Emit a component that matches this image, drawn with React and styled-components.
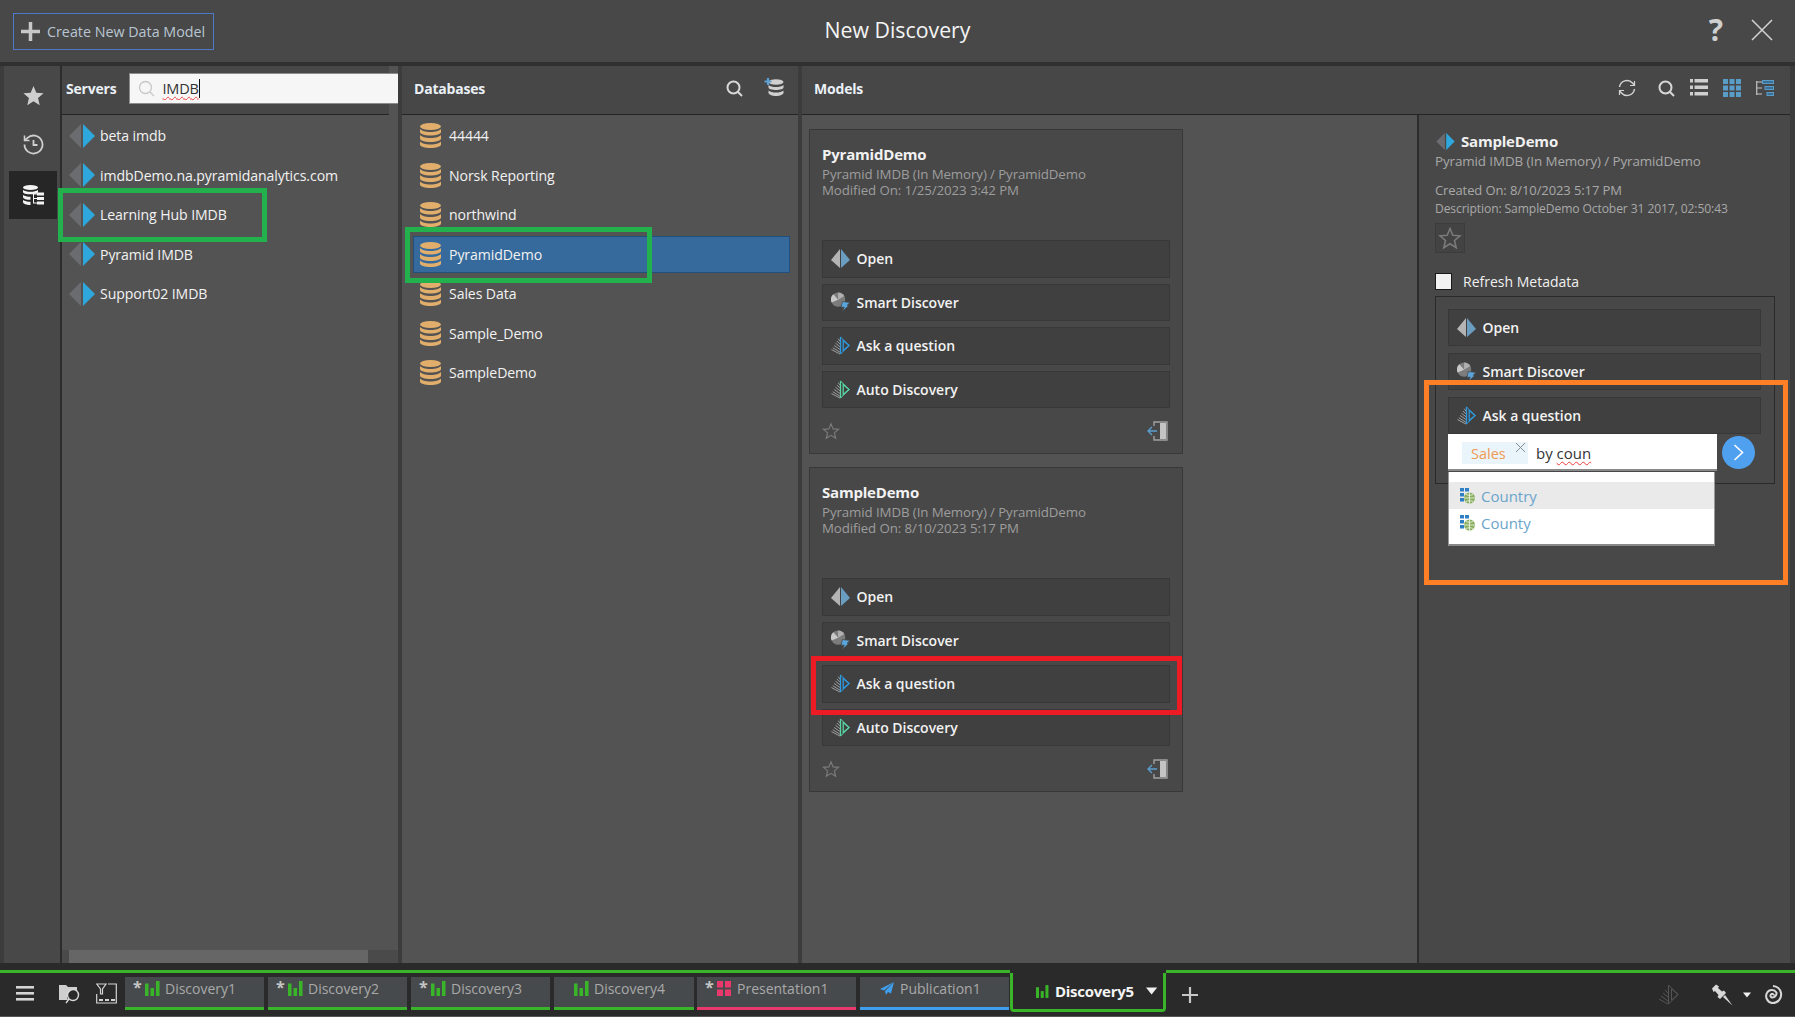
import React from "react";
import styled, { createGlobalStyle } from "styled-components";

const FONT = `"Open Sans", "Noto Sans", "Liberation Sans", sans-serif`;

const Global = createGlobalStyle`
  html, body { margin: 0; padding: 0; background: #2a2a2a; }
  body { font-family: ${FONT}; }
  * { box-sizing: border-box; }
`;

const Page = styled.div`
  position: relative;
  width: 1795px;
  height: 1017px;
  overflow: hidden;
  display: flex;
  flex-direction: column;
  background: #2c2c2c;
  color: #f0f0f0;
`;

/* ---------- top bar ---------- */
const TopBar = styled.header`
  height: 66px;
  flex: none;
  display: flex;
  align-items: flex-start;
  justify-content: space-between;
  background: #484848;
  border-bottom: 4px solid #303030;
  padding: 13px 22px 0 13px;
`;
const CreateButton = styled.button`
  width: 201px;
  height: 37px;
  display: flex;
  align-items: center;
  gap: 7px;
  padding: 0 0 0 7px;
  background: transparent;
  border: 1px solid #4f78c8;
  color: #b9c6d2;
  font: 400 14.3px ${FONT};
`;
const Title = styled.h1`
  position: absolute;
  left: 0;
  right: 0;
  top: 13px;
  margin: 0;
  text-align: center;
  font: 400 21.3px/34px ${FONT};
  color: #f4f4f4;
  pointer-events: none;
`;
const TopActions = styled.div`
  display: flex;
  align-items: center;
  gap: 28px;
  height: 34px;
`;
const HelpMark = styled.span`
  font: 700 30px/34px ${FONT};
  color: #cfcfcf;
`;

/* ---------- main ---------- */
const Main = styled.main`
  height: 897px;
  flex: none;
  display: flex;
  background: #3c3c3c;
  padding-left: 4px;
  padding-right: 5px;
`;
const Rail = styled.nav`
  width: 58px;
  flex: none;
  background: #484848;
  border-right: 2px solid #2c2c2c;
  padding: 5px 3px 0 5px;
  display: flex;
  flex-direction: column;
`;
const RailItem = styled.div`
  height: 48px;
  margin-top: ${(p) => p.$mt || 0}px;
  display: flex;
  align-items: center;
  justify-content: center;
  background: ${(p) => (p.$active ? "#262626" : "transparent")};
`;
const Panel = styled.section`
  flex: ${(p) => (p.$grow ? "1 1 0" : "none")};
  width: ${(p) => p.$w || "auto"};
  margin-right: ${(p) => p.$mr || 0}px;
  display: flex;
  flex-direction: column;
  background: #535353;
  min-width: 0;
`;
const PanelHead = styled.div`
  height: 49px;
  flex: none;
  display: flex;
  align-items: center;
  background: #474747;
  border-bottom: 1px solid #252525;
  padding: 0 ${(p) => p.$pr || 0}px 4px ${(p) => p.$pl || 12}px;
  margin-right: ${(p) => p.$cut || 0}px;
  font: 700 14px ${FONT};
  color: #eaf0f6;
  letter-spacing: -0.2px;
`;
const HeadLabel = styled.span`
  flex: ${(p) => (p.$grow ? 1 : "none")};
`;
const HeadTools = styled.div`
  display: flex;
  align-items: center;
  gap: ${(p) => p.$gap || 12}px;
`;
const RefreshSlot = styled.span`
  display: flex;
  margin-right: 7px;
`;
const SearchBox = styled.div`
  width: 272px;
  height: 31px;
  margin-left: 12px;
  margin-right: -9px;
  background: #f6f6f6;
  border: 1px solid #8c8c8c;
  border-right: 0;
  display: flex;
  align-items: center;
  padding-left: 8px;
  gap: 8px;
  font: 400 14.5px ${FONT};
  color: #333;
`;
const Misspelt = styled.span`
  text-decoration: underline wavy #e8403c 1px;
  text-underline-offset: 2px;
  border-right: ${(p) => (p.$caret ? "1px solid #111" : "0")};
`;
const ListBody = styled.div`
  flex: 1;
  padding-top: 1px;
  display: flex;
  flex-direction: column;
  min-height: 0;
`;
const Row = styled.div`
  height: 39.5px;
  flex: none;
  display: flex;
  align-items: center;
  gap: ${(p) => p.$gap}px;
  padding-left: ${(p) => p.$pl}px;
  font: 400 14.1px ${FONT};
  letter-spacing: -0.09px;
  color: #f2f2f2;
`;
const DbRow = styled.div`
  height: 37px;
  margin: 1.25px 8px 1.25px 11px;
  flex: none;
  display: flex;
  align-items: center;
  gap: 8px;
  padding-left: 6px;
  background: ${(p) => (p.$sel ? "#366a9c" : "transparent")};
  border: 1px solid ${(p) => (p.$sel ? "#22507c" : "transparent")};
  font: 400 14.1px ${FONT};
  letter-spacing: -0.09px;
  color: #f2f2f2;
`;
const HScroll = styled.div`
  height: 13px;
  flex: none;
  margin-top: auto;
  background: #4a4a4a;
  padding-left: 7px;
`;
const HThumb = styled.div`
  width: 299px;
  height: 13px;
  background: #666;
`;

/* ---------- models ---------- */
const ModelsBody = styled.div`
  flex: 1;
  display: flex;
  min-height: 0;
`;
const CardColumn = styled.div`
  width: 615px;
  flex: none;
  padding: 14px 0 0 7px;
  display: flex;
  flex-direction: column;
  gap: 13px;
`;
const Card = styled.article`
  width: 374px;
  height: 325px;
  flex: none;
  background: #484848;
  border: 1px solid #383838;
  padding: 14px 12px 0 12px;
  display: flex;
  flex-direction: column;
`;
const CardTitle = styled.div`
  font: 700 15px/20px ${FONT};
  letter-spacing: -0.2px;
  color: #f2f2f2;
`;
const Muted = styled.div`
  margin-top: ${(p) => p.$mt || 0}px;
  font: 400 13.3px/16px ${FONT};
  letter-spacing: -0.1px;
  color: #9d9d9d;
`;
const Actions = styled.div`
  display: flex;
  flex-direction: column;
  gap: ${(p) => p.$gap}px;
  margin-top: ${(p) => p.$mt || 0}px;
`;
const ActionRow = styled.div`
  height: ${(p) => p.$h}px;
  flex: none;
  display: flex;
  align-items: center;
  gap: 6.5px;
  padding-left: 8px;
  background: #404040;
  border: 1px solid #383838;
  font: 600 14px ${FONT};
  letter-spacing: -0.02px;
  color: #f2f2f2;
`;
const ActionIcon = styled.span`
  width: 19px;
  flex: none;
  display: flex;
  align-items: center;
`;
const CardFooter = styled.div`
  flex: 1;
  display: flex;
  align-items: center;
  justify-content: space-between;
  padding-right: 2px;
`;
const DetailPanel = styled.aside`
  flex: 1;
  background: #484848;
  border-left: 2px solid #2c2c2c;
  padding: 16px 15px 0 16px;
  display: flex;
  flex-direction: column;
`;
const DetailHead = styled.div`
  display: flex;
  align-items: center;
  gap: 6px;
  height: 20px;
  padding-left: 1px;
  font: 700 15px/20px ${FONT};
  letter-spacing: -0.2px;
`;
const DetailLine = styled(Muted)`
  font-size: ${(p) => p.$fs || 13}px;
  color: ${(p) => p.$c || "#a8a8a8"};
`;
const StarBox = styled.div`
  width: 30px;
  height: 30px;
  margin-top: 6px;
  background: #434343;
  border: 1px solid #3c3c3c;
  display: flex;
  align-items: center;
  justify-content: center;
`;
const CheckRow = styled.label`
  height: 17px;
  margin-top: 20px;
  display: flex;
  align-items: center;
  gap: 11px;
  font: 400 14px ${FONT};
  color: #f0f0f0;
`;
const CheckBox = styled.span`
  width: 17px;
  height: 17px;
  background: #f2f2f2;
  border: 1.5px solid #1a1a1a;
`;
const ActionBox = styled.div`
  margin-top: 6px;
  height: 188px;
  border: 1px solid #2a2a2a;
  padding: 12px 13px 0 12px;
`;
const AskWrap = styled.div`
  position: relative;
  display: flex;
  align-items: center;
  gap: 5px;
`;
const AskInput = styled.div`
  width: 269px;
  height: 37px;
  background: #fff;
  border-bottom: 2px solid #8a8a8a;
  display: flex;
  align-items: center;
  padding: 3px 0 0 14px;
  gap: 8px;
  font: 400 15px ${FONT};
  color: #333;
`;
const Chip = styled.span`
  position: relative;
  width: 66px;
  height: 22px;
  background: #eaf4fb;
  color: #f19a52;
  font-size: 14.5px;
  display: flex;
  align-items: center;
  padding-left: 9px;
`;
const ChipClose = styled.span`
  position: absolute;
  right: 3px;
  top: 1px;
  display: flex;
`;
const GoButton = styled.span`
  width: 33px;
  height: 33px;
  border-radius: 50%;
  background: #4fa0ee;
  display: flex;
  align-items: center;
  justify-content: center;
`;
const Dropdown = styled.ul`
  position: absolute;
  left: 0;
  top: 38px;
  width: 267px;
  height: 74px;
  margin: 0;
  padding: 10px 0 0 0;
  list-style: none;
  background: #fff;
  border-bottom: 2px solid #888;
  border-left: 1px solid #999;
  border-right: 1px solid #999;
`;
const DropItem = styled.li`
  height: 27px;
  display: flex;
  align-items: center;
  gap: 6px;
  padding-left: 11px;
  background: ${(p) => (p.$hi ? "#eaeaea" : "#fff")};
  color: #6aa5cc;
  font: 400 15px ${FONT};
`;

/* ---------- bottom bar ---------- */
const BottomGap = styled.div`
  height: 7px;
  flex: none;
  background: #2a2a2a;
`;
const BottomBar = styled.footer`
  height: 47px;
  flex: none;
  display: flex;
  background: #2a2a2a;
  border-bottom: 1px solid #555;
`;
const TabStrip = styled.div`
  width: 1010px;
  flex: none;
  height: 100%;
  border-top: 3px solid #3ab52a;
  display: flex;
  align-items: flex-start;
  padding-top: 4px;
`;
const BarTool = styled.span`
  width: ${(p) => p.$w}px;
  height: 33px;
  flex: none;
  display: flex;
  align-items: center;
  justify-content: center;
`;
const Tab = styled.div`
  width: ${(p) => p.$w}px;
  height: 33px;
  flex: none;
  margin-right: ${(p) => p.$mr ?? 4}px;
  display: flex;
  align-items: center;
  padding: 0 0 7px 8px;
  background: #474a4d;
  border-bottom: 3px solid ${(p) => p.$c};
  font: 400 14px ${FONT};
  color: #a9a9a9;
`;
const TabStar = styled.span`
  width: 12px;
  flex: none;
  align-self: flex-start;
  font: 700 16px/20px ${FONT};
  color: #c4c4c4;
`;
const TabIcon = styled.span`
  width: 20px;
  flex: none;
  display: flex;
  align-items: center;
`;
const ActiveTab = styled.div`
  width: 156px;
  height: 39px;
  flex: none;
  border: 3px solid #3ab52a;
  border-top: 0;
  border-bottom-left-radius: 4px;
  border-bottom-right-radius: 4px;
  margin-top: 3px;
  display: flex;
  align-items: center;
  padding-left: 23px;
  gap: 6px;
  font: 700 15px ${FONT};
  letter-spacing: -0.25px;
  color: #f4f4f4;
`;
const RightStrip = styled.div`
  flex: 1;
  height: 100%;
  border-top: 3px solid #3ab52a;
  display: flex;
  align-items: center;
  padding: 0 12px 0 16px;
`;
const Spacer = styled.div`
  flex: 1;
`;

/* ---------- annotation frames ---------- */
const Frame = styled.div`
  position: absolute;
  left: ${(p) => p.$x}px;
  top: ${(p) => p.$y}px;
  width: ${(p) => p.$w}px;
  height: ${(p) => p.$h}px;
  border: ${(p) => p.$b || 5}px solid ${(p) => p.$c};
  pointer-events: none;
`;

/* ---------- icons ---------- */
const ServerIcon = ({ w = 26, h = 24 }) => (
  <svg width={w} height={h} viewBox="0 0 26 24">
    <polygon points="12,0 12,24 0,12" fill="#6a6c70" />
    <polygon points="14,0 14,24 26,12" fill="#2ea8dc" />
  </svg>
);
const OpenIcon = () => (
  <svg width="19" height="19" viewBox="0 0 19 19">
    <polygon points="9,0 9,19 0,11" fill="#b4b4b4" />
    <polygon points="10,0 10,19 19,11" fill="#6b9dc0" />
  </svg>
);
const SmartIcon = () => (
  <svg width="20" height="20" viewBox="0 0 20 20">
    <circle cx="7.5" cy="7.5" r="7.5" fill="#7c7c7c" />
    <path d="M7.5 7.5V0a7.500 7.500 0 0 1 6.500 3.800z" fill="#b0b0b0" />
    <path d="M7.500 7.500L.7 10.600A7.500 7.500 0 0 1 2.500 1.900z" fill="#c8c8c8" />
    <polygon points="12,9.500 20,10.500 17,13.500 19,13.500 12,20 14,15.500 10.500,15.500" fill="#5aa6dc" stroke="#484848" strokeWidth=".8" />
  </svg>
);
const AskIcon = ({ c = "#2e9ae0" }) => (
  <svg width="21" height="21" viewBox="0 0 21 21" fill="none">
    <g stroke="#a8a8a8" strokeWidth="1">
      <path d="M0.5 15L10 20" />
      <path d="M2 13L10 18" />
      <path d="M3.5 10.5L10 15" />
      <path d="M5 8L10 12" />
      <path d="M6.5 5.5L10 9" />
      <path d="M8 3L10 6" />
    </g>
    <path d="M10.5 1V20" stroke={c} strokeWidth="1.4" />
    <path d="M13.5 5V16L20 10.5Z" stroke={c} strokeWidth="1.4" />
    <path d="M10.5 1L20 10.5L10.5 20" stroke={c} strokeWidth="1.1" />
  </svg>
);
const DbIcon = () => (
  <svg width="21" height="25" viewBox="0 0 21 25">
    <ellipse cx="10.5" cy="3.5" rx="10.5" ry="3.5" fill="#e2ae6c" />
    <path d="M0 6c2 2 5 3 10.5 3S19 8 21 6v3c0 2-5 3.5-10.5 3.5S0 11 0 9z" fill="#e2ae6c" />
    <path d="M0 12c2 2 5 3 10.5 3S19 14 21 12v3.500c0 2-5 3.500-10.500 3.500S0 17.500 0 15.500z" fill="#e2ae6c" />
    <path d="M0 18.500c2 2 5 3 10.500 3S19 20.500 21 18.500v3c0 2-5 3.500-10.500 3.500S0 23.500 0 21.500z" fill="#e2ae6c" />
  </svg>
);
const StarOutline = ({ s = 18, c = "#7b7b7b", sw = 1.6 }) => (
  <svg width={s} height={s} viewBox="0 0 24 24" fill="none" stroke={c} strokeWidth={sw} strokeLinejoin="miter">
    <polygon points="12,2.500 14.800,9.200 22,9.800 16.500,14.500 18.200,21.700 12,17.800 5.800,21.700 7.500,14.500 2,9.800 9.200,9.200" />
  </svg>
);
const ExitIcon = () => (
  <svg width="21" height="20" viewBox="0 0 21 20" fill="none">
    <path d="M7 5V1H20V19H7V15" stroke="#a0a0a0" strokeWidth="1.4" />
    <rect x="13" y="2" width="6" height="16" fill="#c4c4c4" />
    <path d="M10 10H1M5 6L1 10L5 14" stroke="#5a9fd0" strokeWidth="1.300" />
  </svg>
);
const SearchIcon = ({ s = 17, c = "#d8d8d8", sw = 2 }) => (
  <svg width={s} height={s} viewBox="0 0 17 17" fill="none" stroke={c} strokeWidth={sw}>
    <circle cx="7.500" cy="7.500" r="6" />
    <path d="M12 12L16 16" />
  </svg>
);
const AddDbIcon = () => (
  <svg width="20" height="20" viewBox="0 0 20 20">
    <g fill="#d0d0d0">
      <ellipse cx="12" cy="4" rx="7.500" ry="2.800" />
      <path d="M4.500 7c2 1.500 4 2 7.500 2s5.500-.5 7.500-2v2.500c0 1.500-3.500 2.500-7.500 2.500S4.500 11 4.500 9.500z" />
      <path d="M4.500 12.500c2 1.500 4 2 7.500 2s5.500-.5 7.500-2V15c0 1.500-3.500 3-7.500 3s-7.500-1.500-7.500-3z" />
    </g>
    <path d="M4 0v7M.5 3.500h7" stroke="#5aa0d4" strokeWidth="2.200" />
  </svg>
);
const RefreshIcon = () => (
  <svg width="18" height="18" viewBox="0 0 18 18" fill="none" stroke="#d4d4d4" strokeWidth="1.500">
    <path d="M1.500 8a7.500 7.500 0 0 1 13-4l2 2" />
    <path d="M16.500 10a7.500 7.500 0 0 1-13 4l-2-2" />
    <path d="M16.500 2v4.500H12M1.500 16v-4.500H6" strokeWidth="1.200" />
  </svg>
);
const ListIcon = () => (
  <svg width="18" height="18" viewBox="0 0 18 18" fill="#cfcfcf">
    {[0, 6.5, 13].map((y) => (
      <g key={y}>
        <rect x="0" y={y} width="3" height="3.500" />
        <rect x="4.500" y={y} width="13.500" height="3.500" />
      </g>
    ))}
  </svg>
);
const GridIcon = () => (
  <svg width="18" height="18" viewBox="0 0 18 18" fill="#5a9cc8">
    {[0, 6.5, 13].map((y) =>
      [0, 6.5, 13].map((x) => <rect key={`${x}-${y}`} x={x} y={y} width="5" height="5" />)
    )}
  </svg>
);
const TreeIcon = () => (
  <svg width="18" height="16" viewBox="0 0 18 16" fill="none">
    <path d="M.7 1v14M.7 2H6M.7 8H6M.7 14H6" stroke="#c4c4c4" strokeWidth="1.200" />
    <rect x="6.500" y=".5" width="11" height="3" stroke="#5a9cc8" fill="#3c6f94" />
    <rect x="9" y="6.500" width="8.500" height="3" stroke="#5a9cc8" fill="#3c6f94" />
    <rect x="11" y="12.500" width="6.500" height="3" stroke="#5a9cc8" fill="#3c6f94" />
  </svg>
);
const StarSolid = () => (
  <svg width="21" height="21" viewBox="0 0 24 24" fill="#cfcfcf">
    <polygon points="12,1 15.200,8.800 23.500,9.500 17.200,14.900 19.100,23 12,18.700 4.900,23 6.800,14.900 .5,9.500 8.800,8.800" />
  </svg>
);
const HistoryIcon = () => (
  <svg width="21" height="21" viewBox="0 0 21 21" fill="none" stroke="#cfcfcf" strokeWidth="1.800">
    <path d="M1.500 10.500a9 9 0 1 0 3-6.700L1.500 6.500" />
    <path d="M1.500 1.500v5h5" strokeWidth="1.500" />
    <path d="M10.500 6v5h4" />
  </svg>
);
const DbTreeIcon = () => (
  <svg width="21" height="20" viewBox="0 0 21 20">
    <g fill="#f4f4f4">
      <ellipse cx="7.500" cy="2.500" rx="7.500" ry="2.500" />
      <path d="M0 5c2 1.200 4 1.800 7.500 1.800S13 6.200 15 5v2c0 1.500-3.500 2.300-7.500 2.300S0 8.500 0 7z" />
      <path d="M0 10c2 1.200 4 1.800 7.500 1.800v3c-3.500 0-7.500-.8-7.500-2.800z" />
      <path d="M0 15c2 1.200 4 1.800 7.500 1.800V20C3.500 20 0 19 0 17z" />
      <rect x="14" y="7.500" width="7" height="3" />
      <rect x="14" y="12" width="7" height="3" />
      <rect x="14" y="16.500" width="7" height="3" />
      <path d="M10 8.500h4v1h-3V13h3v1h-3v3.500h3v1h-4z" />
    </g>
  </svg>
);
const BarsIcon = ({ s = 15 }) => (
  <svg width={s} height={s} viewBox="0 0 15 15" fill="#3ab52a">
    <rect x="0" y="2.500" width="3.500" height="12.500" />
    <rect x="5.500" y="7" width="3.500" height="8" />
    <rect x="11" y="0" width="3.500" height="15" />
  </svg>
);
const PresIcon = () => (
  <svg width="14" height="15" viewBox="0 0 14 15" fill="#e8386c">
    <rect x="0" y="0" width="6" height="6.500" />
    <rect x="8" y="0" width="6" height="6.500" />
    <rect x="0" y="8.500" width="6" height="6.500" />
    <rect x="8" y="8.500" width="6" height="6.500" />
  </svg>
);
const SendIcon = () => (
  <svg width="14" height="13" viewBox="0 0 14 13" fill="#3f9eee">
    <polygon points="14,0 0,7 4,8.500" />
    <polygon points="14,0 5,9 6,13 8,10 11,11.500" />
  </svg>
);
const MenuIcon = () => (
  <svg width="18" height="15" viewBox="0 0 18 15" fill="#d4d4d4">
    <rect y="0" width="18" height="2.600" />
    <rect y="6" width="18" height="2.600" />
    <rect y="12" width="18" height="2.600" />
  </svg>
);
const FolderSearchIcon = () => (
  <svg width="21" height="20" viewBox="0 0 21 20" fill="none">
    <path d="M0 1h7l2 2h9v3.500a7 7 0 0 0-9 9.500H0z" fill="#cfcfcf" />
    <circle cx="14" cy="11" r="5.500" stroke="#d8d8d8" strokeWidth="1.400" />
    <path d="M10 15l-3 4" stroke="#d8d8d8" strokeWidth="1.400" />
  </svg>
);
const FilterBoardIcon = () => (
  <svg width="21" height="21" viewBox="0 0 21 21" fill="none" stroke="#d4d4d4" strokeWidth="1.200">
    <path d="M.7 1H10L6.500 6V11H4.500V6z" />
    <path d="M.7 11V20H20.300V1H12" />
    <path d="M3 17h4M9 17h4M15 17h4" strokeWidth="2" />
  </svg>
);
const CloseX = () => (
  <svg width="22" height="22" viewBox="0 0 22 22" stroke="#d4d4d4" strokeWidth="1.500">
    <path d="M1 1L21 21M21 1L1 21" />
  </svg>
);
const PlusIcon = ({ s = 19, c = "#c8c8c8", sw = 3.5 }) => (
  <svg width={s} height={s} viewBox="0 0 19 19" stroke={c} strokeWidth={sw}>
    <path d="M9.500 0V19M0 9.500H19" />
  </svg>
);
const Caret = ({ w = 13, h = 8, c = "#f0f0f0" }) => (
  <svg width={w} height={h} viewBox="0 0 13 8" fill={c}>
    <polygon points="0,0 13,0 6.500,8" />
  </svg>
);
const PinIcon = () => (
  <svg width="22" height="22" viewBox="0 0 22 22" fill="#d8d8d8">
    <path d="M1 4.500L5 0.500L8 2.500L7 4L11 7.500L13 6.500L15 9L9 15L6.500 13L7.500 11L4 7L2.500 8z" />
    <path d="M12 13L14 11L21.500 21.500z" />
  </svg>
);
const GreyPyramid = () => (
  <svg width="21" height="21" viewBox="0 0 21 21" fill="none" stroke="#555" strokeWidth="1">
    <path d="M1 15L10 20M3 12L10 17M5 9L10 13M7 6L10 9" />
    <path d="M10.500 1V20M13.500 5V16L20 10.500Z" />
    <path d="M10.500 1L20 10.500L10.500 20" />
  </svg>
);
const SpiralIcon = () => (
  <svg width="20" height="20" viewBox="0 0 20 20" fill="none" stroke="#d8d8d8" strokeWidth="2">
    <path d="M11 10.500a1.800 1.800 0 1 0-2.600 1.800 4 4 0 0 0 5-4.800A5.500 5.500 0 0 0 4.500 7 7 7 0 0 0 9 18a8.500 8.500 0 0 0 9-10 8.500 8.500 0 0 0-8-7" />
  </svg>
);
const GlobeField = () => (
  <svg width="15" height="16" viewBox="0 0 15 16">
    <g fill="#2f7fc4">
      <rect x="0" y="0" width="4" height="3.500" />
      <rect x="5" y="0" width="4" height="3.500" />
      <rect x="0" y="5" width="4" height="3.500" />
      <rect x="0" y="10" width="4" height="3.500" />
    </g>
    <circle cx="9.500" cy="10" r="5.500" fill="#8bb060" />
    <path d="M4 10h11M9.500 4.500v11M6 6.500c2 1 5 1 7 0M6 13.500c2-1 5-1 7 0" stroke="#fff" strokeWidth=".7" fill="none" />
  </svg>
);
const SmallX = () => (
  <svg width="9" height="9" viewBox="0 0 9 9" stroke="#8a8a8a" strokeWidth="1">
    <path d="M0 0L9 9M9 0L0 9" />
  </svg>
);
const Chevron = () => (
  <svg width="11" height="17" viewBox="0 0 11 17" fill="none" stroke="#fff" strokeWidth="1.600">
    <path d="M1.500 1L9.500 8.500L1.500 16" />
  </svg>
);

/* ---------- data ---------- */
const servers = ["beta imdb", "imdbDemo.na.pyramidanalytics.com", "Learning Hub IMDB", "Pyramid IMDB", "Support02 IMDB"];
const databases = ["44444", "Norsk Reporting", "northwind", "PyramidDemo", "Sales Data", "Sample_Demo", "SampleDemo"];
const cards = [
  { name: "PyramidDemo", modified: "Modified On: 1/25/2023 3:42 PM" },
  { name: "SampleDemo", modified: "Modified On: 8/10/2023 5:17 PM" },
];
const actionList = [
  { label: "Open", icon: <OpenIcon /> },
  { label: "Smart Discover", icon: <SmartIcon /> },
  { label: "Ask a question", icon: <AskIcon /> },
  { label: "Auto Discovery", icon: <AskIcon c="#58d6a4" /> },
];
const tabs = [
  { label: "Discovery1", star: true, c: "#3ab52a", w: 139, icon: <BarsIcon /> },
  { label: "Discovery2", star: true, c: "#3ab52a", w: 139, icon: <BarsIcon /> },
  { label: "Discovery3", star: true, c: "#3ab52a", w: 139, icon: <BarsIcon /> },
  { label: "Discovery4", c: "#3ab52a", w: 140, mr: 3, icon: <BarsIcon /> },
  { label: "Presentation1", star: true, c: "#e8386c", w: 159, icon: <PresIcon /> },
  { label: "Publication1", c: "#3f9eee", w: 149, mr: 0, icon: <SendIcon /> },
];

export default function App() {
  return (
    <Page>
      <Global />
      <TopBar>
        <CreateButton>
          <PlusIcon />
          Create New Data Model
        </CreateButton>
        <Title>New Discovery</Title>
        <TopActions>
          <HelpMark>?</HelpMark>
          <CloseX />
        </TopActions>
      </TopBar>

      <Main>
        <Rail>
          <RailItem><StarSolid /></RailItem>
          <RailItem $mt={1}><HistoryIcon /></RailItem>
          <RailItem $active $mt={3}><DbTreeIcon /></RailItem>
        </Rail>

        <Panel $w="336px" $mr={4}>
          <PanelHead $pl={4} $cut={9}>
            <HeadLabel>Servers</HeadLabel>
            <SearchBox>
              <SearchIcon c="#c8c8c8" sw={1.3} />
              <Misspelt $caret>IMDB</Misspelt>
            </SearchBox>
          </PanelHead>
          <ListBody>
            {servers.map((s) => (
              <Row key={s} $gap={5} $pl={7}>
                <ServerIcon />
                {s}
              </Row>
            ))}
            <HScroll><HThumb /></HScroll>
          </ListBody>
        </Panel>

        <Panel $w="396px" $mr={4}>
          <PanelHead $pr={14}>
            <HeadLabel $grow>Databases</HeadLabel>
            <HeadTools $gap={21}>
              <SearchIcon />
              <AddDbIcon />
            </HeadTools>
          </PanelHead>
          <ListBody>
            {databases.map((d) => (
              <DbRow key={d} $sel={d === "PyramidDemo"}>
                <DbIcon />
                {d}
              </DbRow>
            ))}
          </ListBody>
        </Panel>

        <Panel $grow>
          <PanelHead $pr={16}>
            <HeadLabel $grow>Models</HeadLabel>
            <HeadTools $gap={15}>
              <RefreshSlot><RefreshIcon /></RefreshSlot>
              <SearchIcon />
              <ListIcon />
              <GridIcon />
              <TreeIcon />
            </HeadTools>
          </PanelHead>
          <ModelsBody>
            <CardColumn>
              {cards.map((c) => (
                <Card key={c.name}>
                  <CardTitle>{c.name}</CardTitle>
                  <Muted $mt={2}>Pyramid IMDB (In Memory) / PyramidDemo</Muted>
                  <Muted>{c.modified}</Muted>
                  <Actions $gap={6} $mt={42}>
                    {actionList.map((a) => (
                      <ActionRow key={a.label} $h={37.5}>
                        <ActionIcon>{a.icon}</ActionIcon>
                        {a.label}
                      </ActionRow>
                    ))}
                  </Actions>
                  <CardFooter>
                    <StarOutline />
                    <ExitIcon />
                  </CardFooter>
                </Card>
              ))}
            </CardColumn>

            <DetailPanel>
              <DetailHead>
                <ServerIcon w={19} h={17} />
                SampleDemo
              </DetailHead>
              <DetailLine $fs={13.4} $mt={2}>Pyramid IMDB (In Memory) / PyramidDemo</DetailLine>
              <DetailLine $mt={13}>Created On: 8/10/2023 5:17 PM</DetailLine>
              <DetailLine $fs={12.1} $mt={3}>Description: SampleDemo October 31 2017, 02:50:43</DetailLine>
              <StarBox><StarOutline s={24} c="#7a7a7a" /></StarBox>
              <CheckRow>
                <CheckBox />
                Refresh Metadata
              </CheckRow>
              <ActionBox>
                <Actions $gap={7}>
                  {actionList.slice(0, 3).map((a) => (
                    <ActionRow key={a.label} $h={37}>
                      <ActionIcon>{a.icon}</ActionIcon>
                      {a.label}
                    </ActionRow>
                  ))}
                </Actions>
                <AskWrap>
                  <AskInput>
                    <Chip>
                      Sales
                      <ChipClose><SmallX /></ChipClose>
                    </Chip>
                    <span>by <Misspelt>coun</Misspelt></span>
                  </AskInput>
                  <GoButton><Chevron /></GoButton>
                  <Dropdown>
                    <DropItem $hi><GlobeField />Country</DropItem>
                    <DropItem><GlobeField />County</DropItem>
                  </Dropdown>
                </AskWrap>
              </ActionBox>
            </DetailPanel>
          </ModelsBody>
        </Panel>
      </Main>

      <BottomGap />
      <BottomBar>
        <TabStrip>
          <BarTool $w={50}><MenuIcon /></BarTool>
          <BarTool $w={38}><FolderSearchIcon /></BarTool>
          <BarTool $w={37}><FilterBoardIcon /></BarTool>
          {tabs.map((t) => (
            <Tab key={t.label} $w={t.w} $c={t.c} $mr={t.mr}>
              <TabStar>{t.star ? "*" : ""}</TabStar>
              <TabIcon>{t.icon}</TabIcon>
              {t.label}
            </Tab>
          ))}
        </TabStrip>
        <ActiveTab>
          <BarsIcon />
          Discovery5
          <Spacer />
          <Caret />
          <Spacer />
        </ActiveTab>
        <RightStrip>
          <PlusIcon s={16} sw={2.6} />
          <Spacer />
          <GreyPyramid />
          <BarTool $w={32} />
          <PinIcon />
          <BarTool $w={8} />
          <BarTool $w={12}><Caret w={8} h={6} /></BarTool>
          <BarTool $w={10} />
          <SpiralIcon />
        </RightStrip>
      </BottomBar>

      <Frame $x={58} $y={188} $w={209} $h={54} $c="#22b14c" />
      <Frame $x={405} $y={227} $w={247} $h={56} $c="#22b14c" />
      <Frame $x={811} $y={656} $w={371} $h={59} $c="#ed1c24" />
      <Frame $x={1424} $y={380} $w={364} $h={205} $c="#ff7f27" />
    </Page>
  );
}
